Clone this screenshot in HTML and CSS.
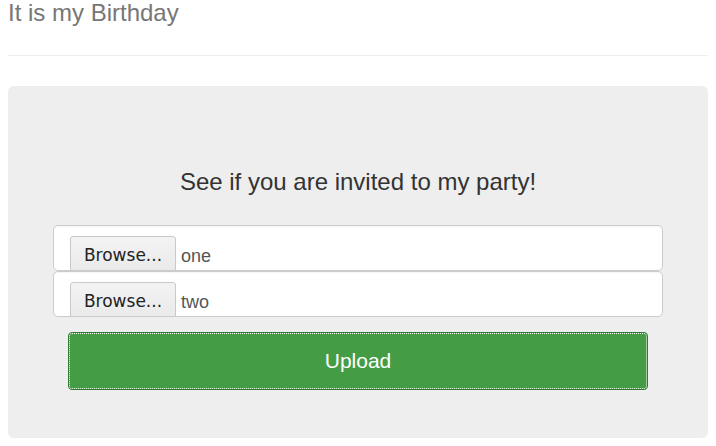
FILE: index.html
```html
<!DOCTYPE html>
<html>
<head>
<meta charset="utf-8">
<link rel="stylesheet" href="styles.css">
</head>
<body>
<div class="page">
  <h3 class="title">It is my Birthday</h3>
  <hr class="rule">
  <div class="jumbotron">
    <h2 class="lead">See if you are invited to my party!</h2>
    <form class="form">
      <div class="file-input">
        <span class="browse">Browse...</span>
        <span class="file-name">one</span>
      </div>
      <div class="file-input">
        <span class="browse">Browse...</span>
        <span class="file-name">two</span>
      </div>
      <button type="button" class="upload">Upload</button>
    </form>
  </div>
</div>
</body>
</html>
```

FILE: styles.css
```css
html, body {
  margin: 0;
  padding: 0;
  background: #fff;
}

.page {
  padding: 0 8px 8px;
  font-family: "Liberation Sans", Arial, sans-serif;
}

.title {
  margin: 0;
  font-size: 24px;
  line-height: 26px;
  font-weight: normal;
  color: #777;
}

.rule {
  margin: 29px 0 30px;
  border: 0;
  border-top: 1px solid #eee;
  height: 0;
}

.jumbotron {
  background: #eee;
  border-radius: 6px;
  padding: 82px 45px 48px;
}

.lead {
  margin: 0 0 30px;
  text-align: center;
  font-size: 24px;
  line-height: 27px;
  font-weight: normal;
  color: #333;
}

.form {
  display: flex;
  flex-direction: column;
}

.file-input {
  box-sizing: border-box;
  height: 46px;
  background: #fff;
  border: 1px solid #ccc;
  border-radius: 5px;
  padding: 10px 16px 0;
  display: flex;
  align-items: flex-start;
  overflow: hidden;
  box-shadow: inset 0 1px 1px rgba(0,0,0,0.04);
}

.browse {
  box-sizing: border-box;
  width: 106px;
  height: 40px;
  background: linear-gradient(#f3f3f3, #e9e9e9);
  border: 1px solid #c9c9c9;
  border-radius: 3px;
  font-family: "DejaVu Sans", sans-serif;
  font-size: 17px;
  line-height: 20px;
  padding-top: 8px;
  color: #222;
  text-align: center;
  flex: none;
}

.file-name {
  margin-left: 5px;
  font-size: 18px;
  line-height: 20px;
  padding-top: 10px;
  color: #555;
}

.upload {
  box-sizing: border-box;
  margin: 15px 15px 0;
  height: 58px;
  background: #449d44;
  border: 1px solid #2f7a2f;
  border-radius: 4px;
  color: #fff;
  font-family: "Liberation Sans", Arial, sans-serif;
  font-size: 21px;
  line-height: 24px;
  outline: 1px dotted #fff;
  outline-offset: -2px;
  cursor: pointer;
  padding: 0;
}
```
